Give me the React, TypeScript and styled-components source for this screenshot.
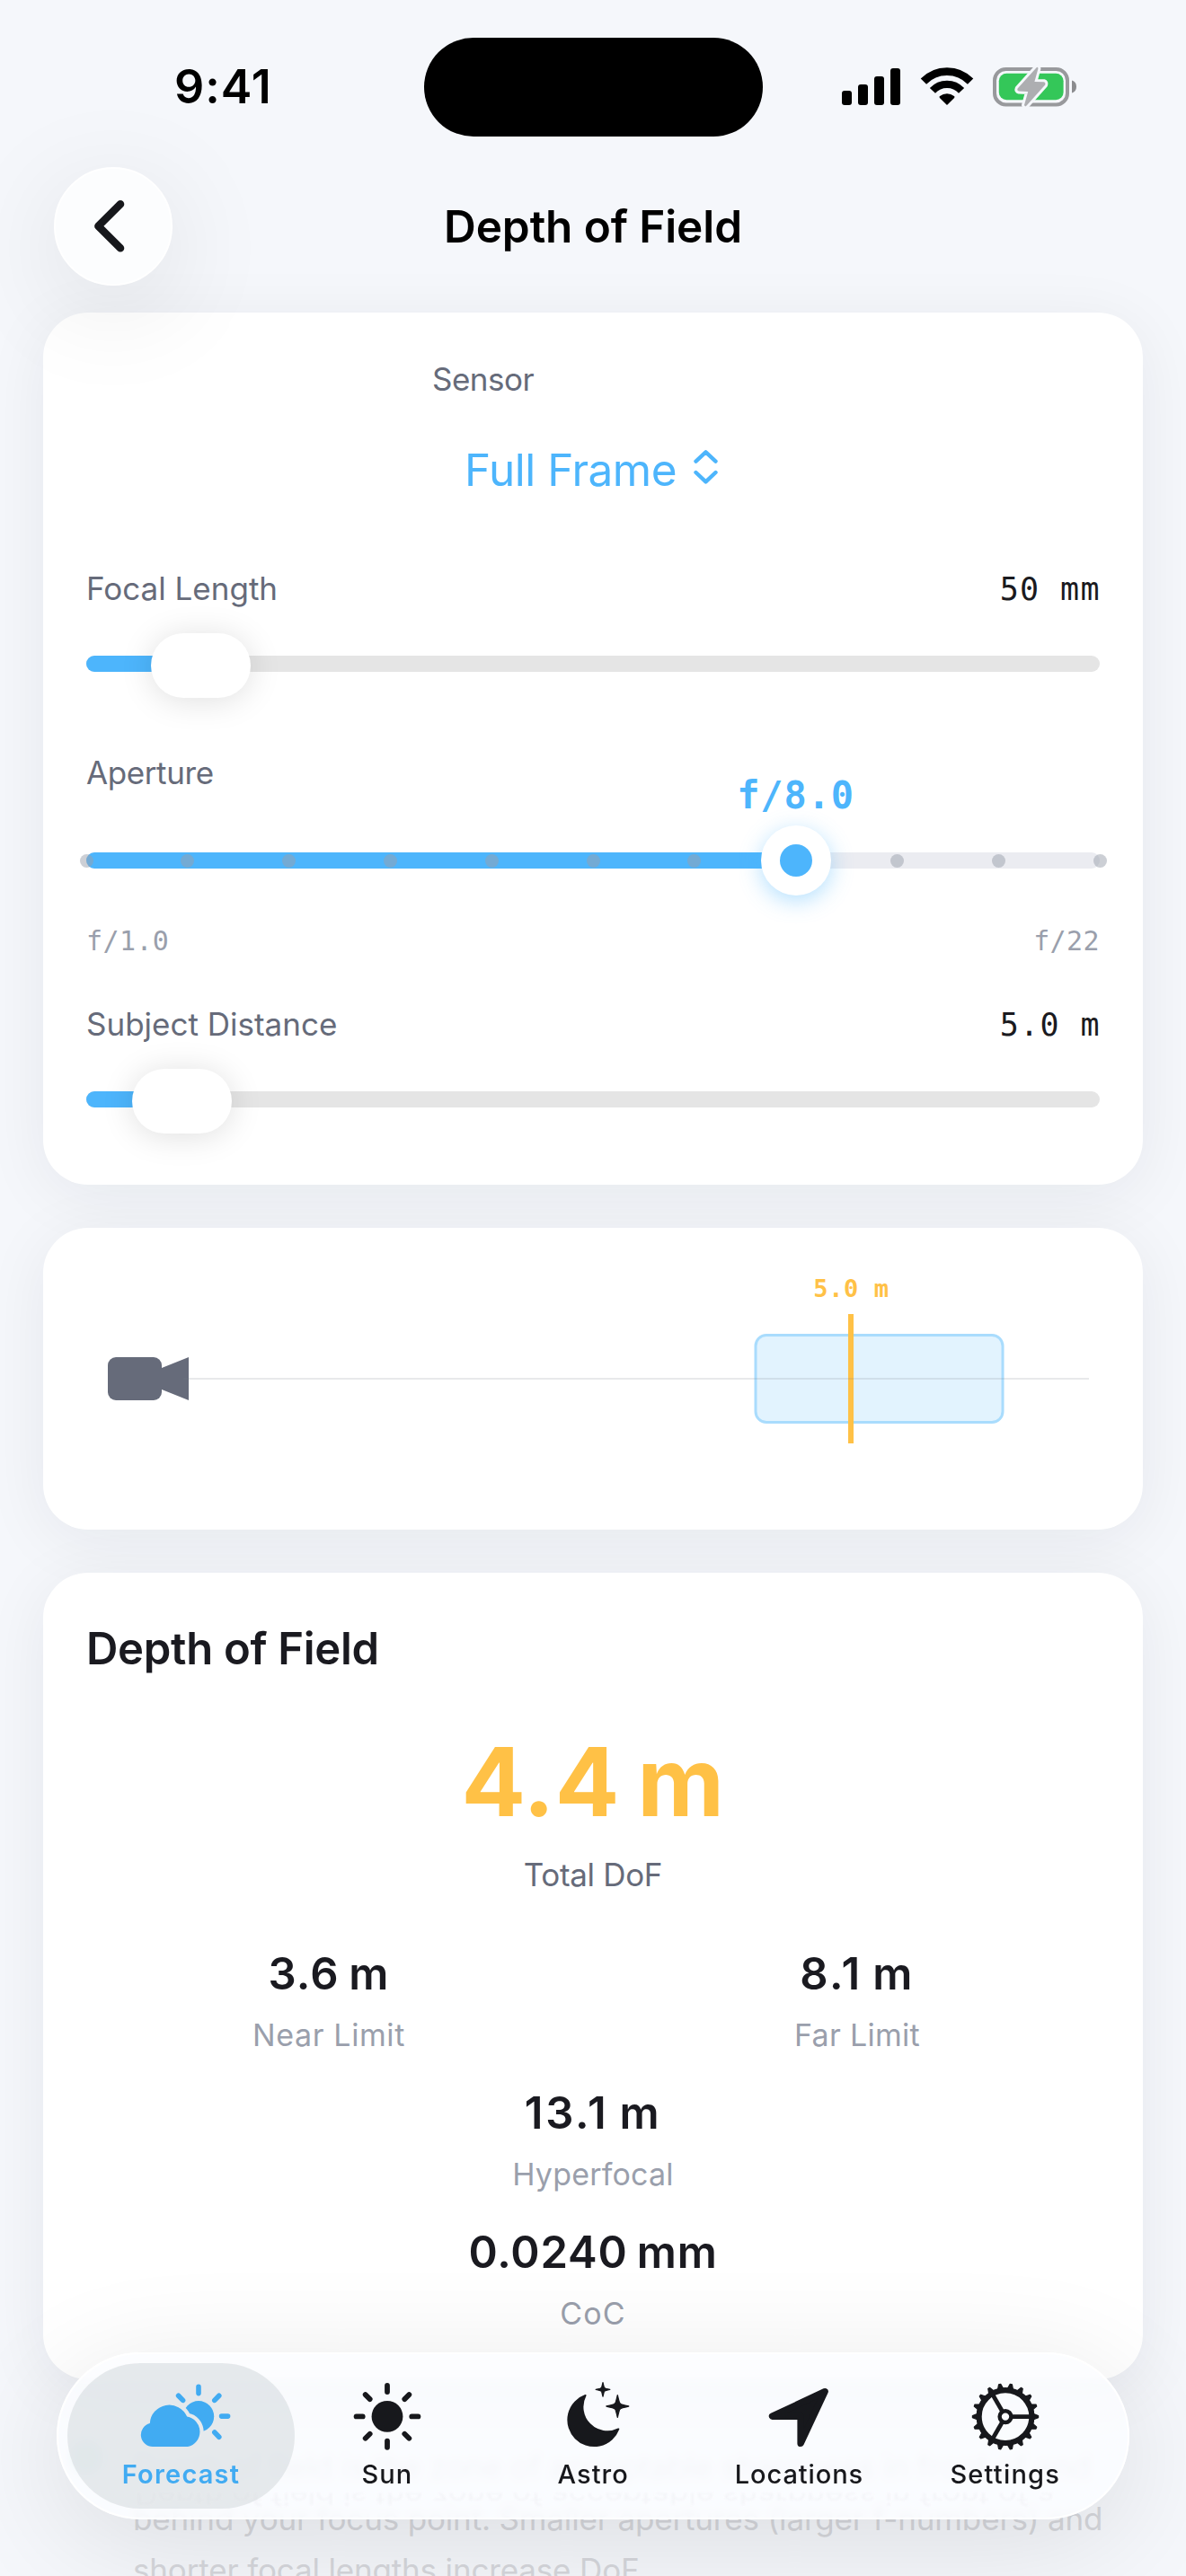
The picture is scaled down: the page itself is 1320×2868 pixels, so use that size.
import React from 'react';
import styled, { createGlobalStyle } from 'styled-components';

const color = {
  page: '#f5f7fb',
  ink: '#1a1a20',
  label: '#666b7a',
  faint: '#9a9fac',
  blue: '#4db5fc',
  amber: '#ffc146',
  tab: '#17181c',
};

const sans = `Inter, 'Liberation Sans', sans-serif`;
const mono = `'DejaVu Sans Mono', 'Liberation Mono', monospace`;

const GlobalStyle = createGlobalStyle`
  html, body { margin: 0; padding: 0; background: ${color.page}; }
  *, *::before, *::after { box-sizing: border-box; }
  svg { display: block; overflow: visible; flex: none; }
`;

const Screen = styled.div`
  position: relative;
  width: 1320px;
  height: 2868px;
  overflow: hidden;
  background: ${color.page};
  font-family: ${sans};
  display: flex;
  flex-direction: column;
`;

/* ---------- top chrome ---------- */

const StatusBar = styled.div`
  flex: none;
  height: 170px;
  padding: 24px 0 0 194px;
  display: flex;
  align-items: center;
`;

const Clock = styled.div`
  width: 277.5px;
  font-size: 52px;
  line-height: 62px;
  font-weight: 600;
  letter-spacing: 1px;
  color: #000;
`;

const Island = styled.div`
  width: 377px;
  height: 110px;
  border-radius: 55px;
  background: #000;
`;

const StatusIcons = styled.div`
  display: flex;
  align-items: center;
  gap: 22.5px;
  margin-left: 88.5px;
`;

const NavBar = styled.header`
  flex: none;
  position: relative;
  z-index: 1;
  height: 164px;
  padding: 0 60px;
  display: grid;
  grid-template-columns: 132px 1fr 132px;
  align-items: center;
`;

const BackButton = styled.button`
  width: 132px;
  height: 132px;
  padding: 0 8px 0 0;
  border: 2px solid #fff;
  border-radius: 50%;
  background: #fcfdfe;
  display: flex;
  align-items: center;
  justify-content: center;
  box-shadow: 0 24px 120px rgba(0, 0, 0, 0.1);
`;

const Title = styled.h1`
  margin: 0;
  font-size: 49.5px;
  line-height: 60px;
  font-weight: 600;
  letter-spacing: -0.1px;
  text-align: center;
  color: #000;
`;

/* ---------- cards ---------- */

const Content = styled.main`
  flex: none;
  padding: 14px 48px 0;
  display: flex;
  flex-direction: column;
  gap: 48px;
`;

const Card = styled.section<{ $h: number; $pad?: string }>`
  flex: none;
  height: ${(p) => p.$h}px;
  padding: ${(p) => p.$pad ?? '0'};
  border-radius: 50px;
  background: #fff;
  box-shadow: 0 12px 72px rgba(20, 24, 40, 0.065);
  display: flex;
  flex-direction: column;
`;

const Label = styled.div<{ $ls?: number; $faint?: boolean; $size?: number }>`
  font-size: ${(p) => p.$size ?? 35}px;
  line-height: 48px;
  letter-spacing: ${(p) => p.$ls ?? 0}px;
  color: ${(p) => (p.$faint ? color.faint : color.label)};
  white-space: nowrap;
`;

const SensorPicker = styled.div`
  align-self: center;
  width: 358px;
`;

const PickerButton = styled.div`
  margin-top: 47px;
  padding-right: 4px;
  display: flex;
  align-items: center;
  justify-content: center;
  gap: 19px;
  font-size: 49.5px;
  line-height: 60px;
  letter-spacing: -0.51px;
  color: ${color.blue};
`;

const FieldRow = styled.div<{ $mt: number }>`
  margin-top: ${(p) => p.$mt}px;
  display: flex;
  justify-content: space-between;
  align-items: baseline;
  height: 48px;
`;

const Value = styled.div`
  font-family: ${mono};
  font-size: 35px;
  line-height: 48px;
  letter-spacing: 1.4px;
  margin-right: -1px;
  color: ${color.ink};
  white-space: pre;
`;

const SliderBox = styled.div<{ $mt: number }>`
  position: relative;
  margin-top: ${(p) => p.$mt}px;
  height: 72px;
  padding: 25px 0 29px;
`;

const Track = styled.div<{ $tone?: string }>`
  height: 18px;
  border-radius: 9px;
  background: ${(p) => p.$tone ?? '#e5e5e5'};
`;

const Fill = styled.div`
  height: 18px;
  border-radius: 9px;
  background: ${color.blue};
`;

const PillThumb = styled.div`
  position: absolute;
  top: 0;
  width: 111px;
  height: 72px;
  margin-left: -55.5px;
  border-radius: 36px;
  background: #fff;
  box-shadow: 0 3px 36px rgba(0, 0, 0, 0.13);
`;

const StopSlider = styled.div`
  position: relative;
  margin-top: 35px;
  height: 78px;
  padding: 30px 0;
`;

const Stop = styled.div`
  position: absolute;
  top: 32px;
  width: 15px;
  height: 15px;
  margin-left: -7.5px;
  border-radius: 50%;
  background: ${color.faint};
  opacity: 0.5;
`;

const RoundThumb = styled.div`
  position: absolute;
  top: 0;
  width: 78px;
  height: 78px;
  margin-left: -39px;
  border-radius: 50%;
  background: #fff;
  box-shadow: 0 6px 24px rgba(77, 181, 252, 0.42);
  display: flex;
  align-items: center;
  justify-content: center;

  &::after {
    content: '';
    width: 36px;
    height: 36px;
    border-radius: 50%;
    background: ${color.blue};
  }
`;

const StopValue = styled.div`
  position: absolute;
  top: -57px;
  width: 200px;
  margin-left: -100px;
  text-align: center;
  font: 700 42px/48px ${mono};
  letter-spacing: 0.86px;
  color: ${color.blue};
`;

const RangeRow = styled.div`
  margin-top: 31px;
  display: flex;
  justify-content: space-between;
  font: 30px/40px ${mono};
  letter-spacing: 0.4px;
  color: ${color.faint};
`;

/* ---------- results ---------- */

const CardTitle = styled.h2`
  margin: 0;
  font-size: 49px;
  line-height: 60px;
  font-weight: 600;
  letter-spacing: -0.3px;
  color: ${color.ink};
`;

const Centered = styled.div`
  display: flex;
  flex-direction: column;
  align-items: center;
`;

const Total = styled.div`
  margin-top: 58px;
  margin-bottom: 19px;
  font-size: 106px;
  line-height: 120px;
  font-weight: 700;
  letter-spacing: 0.4px;
  word-spacing: -6px;
  color: ${color.amber};
`;

const Results = styled.div`
  margin-top: 57px;
  display: grid;
  grid-template-columns: 1fr 1fr;
  column-gap: 48px;
  row-gap: 33px;
`;

const Metric = styled.div<{ $wide?: boolean }>`
  grid-column: ${(p) => (p.$wide ? '1 / -1' : 'auto')};
  display: flex;
  flex-direction: column;
  align-items: center;
  gap: 14px;
`;

const MetricValue = styled.div<{ $ls: number }>`
  font-size: 49px;
  line-height: 60px;
  font-weight: 600;
  letter-spacing: ${(p) => p.$ls}px;
  word-spacing: -3px;
  color: ${color.ink};
`;

const Info = styled.section`
  flex: none;
  padding: 21px 36px 0 30px;
  display: flex;
  gap: 34px;
`;

const InfoDot = styled.div`
  width: 36px;
  height: 36px;
  border-radius: 50%;
  background: #bfe6e2;
`;

const InfoText = styled.p`
  margin: 0;
  font-size: 35px;
  line-height: 57.5px;
  letter-spacing: -0.16px;
  color: #d6d7dc;
  white-space: pre;
`;

/* ---------- tab bar ---------- */

const TabBar = styled.nav`
  position: absolute;
  left: 63px;
  top: 2619px;
  width: 1194px;
  height: 186px;
  border-radius: 93px;
  border: 2px solid #fff;
  background: rgba(251, 252, 255, 0.82);
  backdrop-filter: blur(4px);
  box-shadow: 0 24px 130px rgba(0, 0, 0, 0.11);
  padding: 10px;
  display: flex;

  /* light bent back along the lower rim of the glass */
  &::before {
    content: 'Depth of field is the zone of acceptable sharpness in front of and';
    position: absolute;
    left: 85px;
    right: 84px;
    bottom: 6px;
    height: 24px;
    overflow: hidden;
    font-size: 35px;
    line-height: 40px;
    letter-spacing: -0.16px;
    color: #f4f5f9;
    white-space: pre;
    filter: blur(1px);
    transform: scaleY(-0.8);
  }
`;

const Tab = styled.a<{ $active?: boolean }>`
  position: relative;
  flex: none;
  width: 253px;
  margin-right: -23.7px;
  height: 162px;
  padding-top: 21px;
  border-radius: 81px;
  background: ${(p) => (p.$active ? 'rgba(217, 221, 225, 0.62)' : 'transparent')};
  color: ${(p) => (p.$active ? '#41abf2' : color.tab)};
  display: flex;
  flex-direction: column;
  align-items: center;
`;

const TabLabel = styled.span<{ $active?: boolean; $ls: number }>`
  margin-top: 9px;
  font-size: 29px;
  line-height: 36px;
  font-weight: ${(p) => (p.$active ? 600 : 500)};
  letter-spacing: ${(p) => p.$ls}px;
`;

/* ---------- drawings ---------- */

const Signal = () => (
  <svg width="65" height="44" viewBox="937 75 65 44" fill="#000">
    <rect x="937" y="101" width="11" height="16" rx="3" />
    <rect x="955" y="94" width="11" height="23" rx="3" />
    <rect x="973" y="85" width="11" height="32" rx="3" />
    <rect x="991" y="76" width="11" height="41" rx="3" />
  </svg>
);

const Wifi = () => (
  <svg width="58" height="44" viewBox="1024.5 75 58 44" fill="none" stroke="#000">
    <path d="M1027.4 90.6A36.4 36.4 0 0 1 1079.6 90.6" strokeWidth="8.8" />
    <path d="M1037.4 100.9A22 22 0 0 1 1069.6 100.9" strokeWidth="8.4" />
    <path
      d="M1053.5 117L1045.4 108.9Q1044.4 107.8 1045.6 107A12.6 12.6 0 0 1 1061.4 107Q1062.6 107.8 1061.6 108.9Z"
      fill="#000"
      stroke="none"
    />
  </svg>
);

const BOLT =
  'M1153.6 75.2L1132.6 98.6Q1131.6 101 1134 101.6L1144.2 102L1140 117Q1141 119.5 1142.6 117.6L1163.2 94.4Q1164 91.8 1161.8 91.2L1151.4 90.9L1155.4 76.4Q1155.4 73.8 1153.6 75.2Z';

const Battery = () => (
  <svg width="93" height="44" viewBox="1105 75 93 44">
    <rect x="1107" y="77" width="81" height="39.4" rx="12.5" fill="none" stroke="#98999c" strokeWidth="4" />
    <path d="M1193 89.5Q1198 91 1198 96.4T1193 103.4Z" fill="#8b8c8f" />
    <rect x="1111.8" y="81.8" width="71.8" height="29.4" rx="8.5" fill="#34c759" />
    <path d={BOLT} fill={color.page} stroke={color.page} strokeWidth="6" strokeLinejoin="round" />
    <path d={BOLT} fill="#adaeb1" />
  </svg>
);

const BackChevron = () => (
  <svg
    width="34"
    height="58"
    viewBox="105 224 34 58"
    fill="none"
    stroke="#17181c"
    strokeWidth="8.6"
    strokeLinecap="round"
    strokeLinejoin="round"
  >
    <path d="M134 228.3L109.4 252.8L134 277.3" />
  </svg>
);

const UpDown = () => (
  <svg
    width="27"
    height="38"
    viewBox="770.5 504 27 38"
    fill="none"
    stroke={color.blue}
    strokeWidth="4.4"
    strokeLinecap="round"
    strokeLinejoin="round"
  >
    <path d="M773 513.6L784 503.4L795 513.6M773 526L784 536.4L795 526" />
  </svg>
);

const CLOUD =
  'M169.2 2724A13.2 13.2 0 0 1 165.8 2698A21.6 21.6 0 0 1 207.2 2690.6A17 17 0 0 1 208 2724Z';

const CloudSun = () => (
  <svg width="100" height="76" viewBox="151 2652 100 76" fill="currentColor">
    <defs>
      <mask id="cloud-gap" maskUnits="userSpaceOnUse" x="150" y="2640" width="120" height="100">
        <rect x="150" y="2640" width="120" height="100" fill="#fff" />
        <path d={CLOUD} fill="#000" stroke="#000" strokeWidth="8.4" />
      </mask>
    </defs>
    <circle cx="220" cy="2690.3" r="17.2" mask="url(#cloud-gap)" />
    <path d={CLOUD} />
    <path
      d="M220 2657.4V2664.6M197.6 2667.2L202.6 2672.4M242.8 2667.2L237.8 2672.4M245.6 2690.1H252.6M237.8 2708L242.8 2713.2"
      stroke="currentColor"
      strokeWidth="5.6"
      strokeLinecap="round"
    />
  </svg>
);

const SunIcon = () => (
  <svg width="76" height="76" viewBox="393.4 2652 76 76">
    <g transform="translate(431.4 2690.4)">
      <circle r="17.4" fill="currentColor" />
      {Array.from({ length: 8 }, (_, i) => (
        <path
          key={i}
          d="M0 -27.3V-34.4"
          transform={`rotate(${i * 45})`}
          stroke="currentColor"
          strokeWidth="5.8"
          strokeLinecap="round"
        />
      ))}
    </g>
  </svg>
);

/* four-pointed star with pinched sides, centred on (0, 0) */
const Sparkle = ({ x, y, r }: { x: number; y: number; r: number }) => {
  const a = r * 0.25;
  const b = r * 0.17;
  return (
    <path
      transform={`translate(${x} ${y})`}
      d={`M0 ${-r}Q${b} ${-a} ${a} ${-a}Q${a} ${-b} ${r} 0Q${a} ${b} ${a} ${a}Q${b} ${a} 0 ${r}Q${-b} ${a} ${-a} ${a}Q${-a} ${b} ${-r} 0Q${-a} ${-b} ${-a} ${-a}Q${-b} ${-a} 0 ${-r}Z`}
      strokeWidth="1.3"
    />
  );
};

const MoonStars = () => (
  <svg width="76" height="76" viewBox="622.5 2652 76 76" fill="currentColor" stroke="currentColor" strokeLinejoin="round">
    <path d="M652 2667A28.9 28.9 0 1 0 688.8 2704.4A27.6 27.6 0 0 1 652 2667Z" strokeWidth="2" />
    <Sparkle x={671.5} y={2660.4} r={7.8} />
    <Sparkle x={687.8} y={2679} r={12.4} />
  </svg>
);

const LocationArrow = () => (
  <svg width="76" height="76" viewBox="849.5 2652 76 76">
    <path
      d="M916.6 2662.6L858 2690.2L889.6 2690.2L889.6 2720.4Z"
      fill="currentColor"
      stroke="currentColor"
      strokeWidth="7.4"
      strokeLinejoin="round"
    />
  </svg>
);

const Gear = () => (
  <svg width="76" height="76" viewBox="-38 -38.6 76 76" stroke="currentColor" fill="none">
    <circle r="29.4" strokeWidth="6.2" />
    <circle r="6.4" strokeWidth="4.4" />
    {[0, 120, 240].map((a) => (
      <path key={a} d="M7.5 0H28" strokeWidth="4.8" transform={`rotate(${a})`} />
    ))}
    {Array.from({ length: 18 }, (_, i) => (
      <path
        key={i}
        d="M31.5 -3L36.6 -1.1V1.1L31.5 3Z"
        fill="currentColor"
        strokeWidth="1.2"
        strokeLinejoin="round"
        transform={`rotate(${i * 20})`}
      />
    ))}
  </svg>
);

const FocusDiagram = () => (
  <svg width="1224" height="336" viewBox="48 1367 1224 336">
    <rect x="120" y="1511" width="60" height="48" rx="9" fill={color.label} />
    <path d="M180 1523L210 1511V1559L180 1547Z" fill={color.label} />
    <rect x="841" y="1486.5" width="275" height="97" rx="12" fill="#e2f3fe" stroke="#a9dcfd" strokeWidth="3" />
    <rect x="944" y="1463" width="6" height="144" fill={color.amber} />
    <rect x="204" y="1534" width="1008" height="2" fill="#787c88" fillOpacity="0.17" />
    <text
      x="947.4"
      y="1444"
      textAnchor="middle"
      fontFamily="DejaVu Sans Mono, monospace"
      fontWeight="700"
      fontSize="27"
      letterSpacing="0.57"
      fill={color.amber}
    >
      5.0 m
    </text>
  </svg>
);

/* ---------- screen ---------- */

const PillSlider = ({ at, mt }: { at: number; mt: number }) => (
  <SliderBox $mt={mt}>
    <Track>
      <Fill style={{ width: `${at}%` }} />
    </Track>
    <PillThumb style={{ left: `${at}%` }} />
  </SliderBox>
);

const metrics = [
  { value: '3.6 m', ls: 1.2, label: 'Near Limit', labelLs: 0.6 },
  { value: '8.1 m', ls: 2.3, label: 'Far Limit', labelLs: 0.3 },
  { value: '13.1 m', ls: 2.7, label: 'Hyperfocal', labelLs: 0.2, wide: true },
  { value: '0.0240 mm', ls: 0.82, label: 'CoC', labelLs: 1.2, wide: true },
];

const tabs = [
  { label: 'Forecast', icon: <CloudSun />, ls: 1.2, active: true },
  { label: 'Sun', icon: <SunIcon />, ls: 1 },
  { label: 'Astro', icon: <MoonStars />, ls: 1 },
  { label: 'Locations', icon: <LocationArrow />, ls: 0.9 },
  { label: 'Settings', icon: <Gear />, ls: 1.2 },
];

const STOP_COUNT = 11;
const STOP_INDEX = 7;
const stopLeft = (i: number) => `${(i / (STOP_COUNT - 1)) * 100}%`;

export default function App() {
  return (
    <Screen>
      <GlobalStyle />
      <StatusBar>
        <Clock>9:41</Clock>
        <Island />
        <StatusIcons>
          <Signal />
          <Wifi />
          <Battery />
        </StatusIcons>
      </StatusBar>

      <NavBar>
        <BackButton aria-label="Back">
          <BackChevron />
        </BackButton>
        <Title>Depth of Field</Title>
      </NavBar>

      <Content>
        <Card $h={971} $pad="50px 48px 0">
          <SensorPicker>
            <Label $ls={-0.5}>Sensor</Label>
            <PickerButton>
              Full Frame
              <UpDown />
            </PickerButton>
          </SensorPicker>

          <FieldRow $mt={78}>
            <Label>Focal Length</Label>
            <Value>50 mm</Value>
          </FieldRow>
          <PillSlider at={11.3} mt={26} />

          <FieldRow $mt={59}>
            <Label $ls={-0.4}>Aperture</Label>
          </FieldRow>
          <StopSlider>
            <Track $tone="#ebecf1">
              <Fill style={{ width: stopLeft(STOP_INDEX) }} />
            </Track>
            {Array.from({ length: STOP_COUNT }, (_, i) => (
              <Stop key={i} style={{ left: stopLeft(i) }} />
            ))}
            <StopValue style={{ left: stopLeft(STOP_INDEX) }}>f/8.0</StopValue>
            <RoundThumb style={{ left: stopLeft(STOP_INDEX) }} />
          </StopSlider>
          <RangeRow>
            <span>f/1.0</span>
            <span>f/22</span>
          </RangeRow>

          <FieldRow $mt={48}>
            <Label>Subject Distance</Label>
            <Value>5.0 m</Value>
          </FieldRow>
          <PillSlider at={9.45} mt={26} />
        </Card>

        <Card $h={336}>
          <FocusDiagram />
        </Card>

        <Card $h={898} $pad="55px 48px 0">
          <CardTitle>Depth of Field</CardTitle>
          <Centered>
            <Total>4.4 m</Total>
            <Label $ls={-0.34}>Total DoF</Label>
          </Centered>
          <Results>
            {metrics.map((m) => (
              <Metric key={m.label} $wide={m.wide}>
                <MetricValue $ls={m.ls}>{m.value}</MetricValue>
                <Label $faint $size={34} $ls={m.labelLs}>
                  {m.label}
                </Label>
              </Metric>
            ))}
          </Results>
        </Card>

        <Info>
          <InfoDot />
          <InfoText>
            {'Depth of field is the zone of acceptable sharpness in front of and\nbehind your focus point. Smaller apertures (larger f-numbers) and\nshorter focal lengths increase DoF.'}
          </InfoText>
        </Info>
      </Content>

      <TabBar>
        {tabs.map((t) => (
          <Tab key={t.label} $active={t.active}>
            {t.icon}
            <TabLabel $active={t.active} $ls={t.ls}>
              {t.label}
            </TabLabel>
          </Tab>
        ))}
      </TabBar>
    </Screen>
  );
}
